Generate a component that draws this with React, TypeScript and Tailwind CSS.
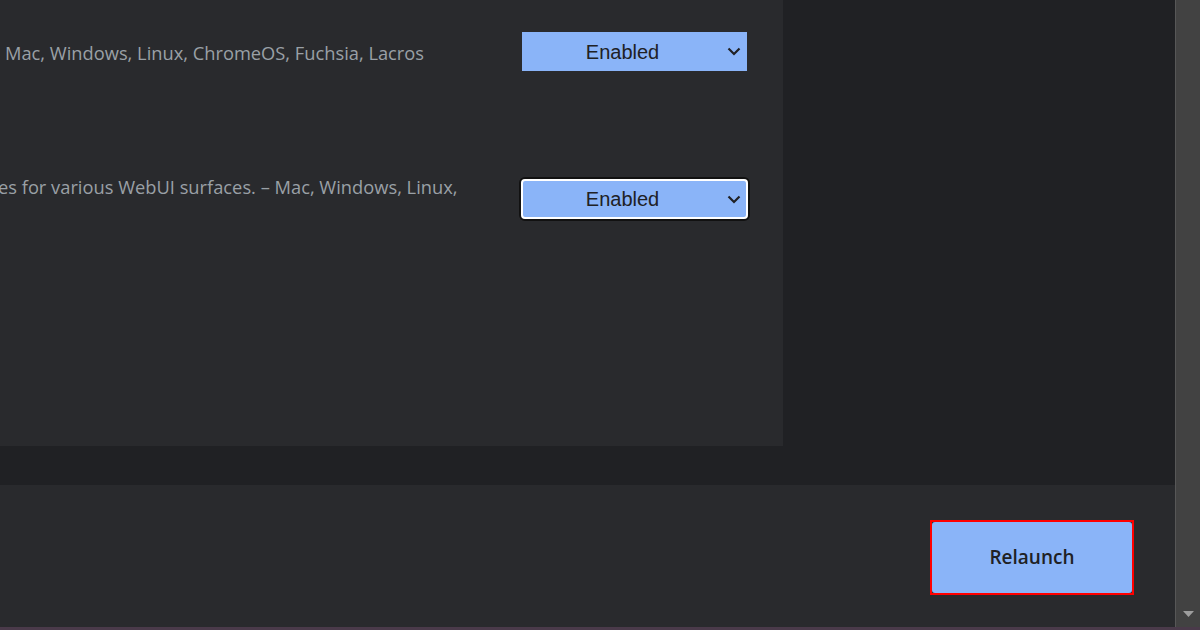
import React from "react";

function Chevron() {
  return (
    <svg width="14" height="9" viewBox="0 0 14 9" className="shrink-0">
      <path d="M1.5 1.5 L7 7 L12.5 1.5" fill="none" stroke="#202124" strokeWidth="2.2" />
    </svg>
  );
}

function Label() {
  return (
    <span className="flex-1 text-center text-[20px] text-[#202124] mr-[16px]" style={{ fontFamily: '"Liberation Sans", Arial, sans-serif' }}>
      Enabled
    </span>
  );
}

function Select({ focused }: { focused?: boolean }) {
  if (focused) {
    return (
      <div className="rounded-[6px] border-2 border-[#111] ml-[519px] w-[231px] h-[44px]">
        <div className="rounded-[4px] border-2 border-white bg-[#8ab4f8] h-full flex items-center pl-[11px] pr-[5px]">
          <Label />
          <Chevron />
        </div>
      </div>
    );
  }
  return (
    <div className="bg-[#8ab4f8] ml-[522px] w-[225px] h-[39px] flex items-center pl-[12px] pr-[6px]">
      <Label />
      <Chevron />
    </div>
  );
}

export default function App() {
  return (
    <div className="w-[1200px] h-[630px] flex flex-col overflow-hidden bg-[#202124]" style={{ fontFamily: '"Open Sans", "Noto Sans", sans-serif' }}>
      <div className="flex h-[627px]">
        <div className="w-[1175px] flex flex-col">
          <div className="h-[485px] bg-[#202124]">
            <div className="w-[783px] h-[446px] bg-[#292a2d] relative overflow-hidden">
              <div className="pt-[32px] h-[177px] relative">
                <div className="absolute left-[5px] top-[40px] text-[18.3px] leading-[26px] text-[#9aa0a6] whitespace-nowrap">
                  Mac, Windows, Linux, ChromeOS, Fuchsia, Lacros
                </div>
                <Select />
              </div>
              <div className="relative">
                <div className="absolute left-[-2px] top-[-3px] text-[18.3px] leading-[26px] text-[#9aa0a6] whitespace-nowrap">
                  es for various WebUI surfaces. – Mac, Windows, Linux,
                </div>
                <Select focused />
              </div>
            </div>
          </div>
          <div className="flex-1 bg-[#292a2d] flex justify-end items-start pt-[35px] pr-[41px]">
            <div className="border-2 border-[#ff0000]">
              <button className="w-[200px] h-[71px] rounded-[3px] bg-[#8ab4f8] text-[19px] font-semibold text-[#202124] flex items-center justify-center">
                Relaunch
              </button>
            </div>
          </div>
        </div>
        <div className="w-[25px] bg-[#424242] border-l border-[#575757] flex flex-col justify-end items-center pb-[10px]">
          <svg width="11" height="6" viewBox="0 0 11 6">
            <path d="M0 0 L11 0 L5.5 6 Z" fill="#9e9e9e" />
          </svg>
        </div>
      </div>
      <div className="h-[3px] bg-[#4a3a4a]" />
    </div>
  );
}
